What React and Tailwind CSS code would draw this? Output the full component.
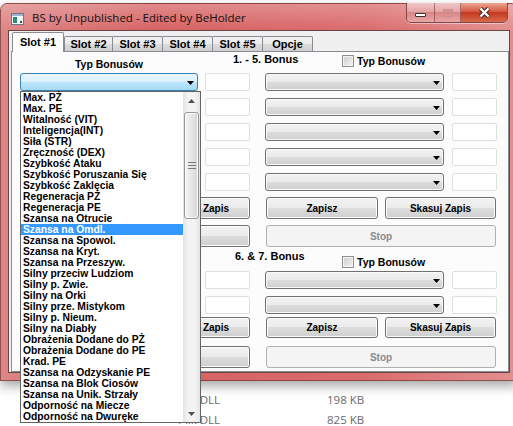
import clsx from "clsx";

const bonusy = [
  "Max. PŻ",
  "Max. PE",
  "Witalność (VIT)",
  "Inteligencja(INT)",
  "Siła (STR)",
  "Zręczność (DEX)",
  "Szybkość Ataku",
  "Szybkość Poruszania Się",
  "Szybkość Zaklęcia",
  "Regeneracja PŻ",
  "Regeneracja PE",
  "Szansa na Otrucie",
  "Szansa na Omdl.",
  "Szansa na Spowol.",
  "Szansa na Kryt.",
  "Szansa na Przeszyw.",
  "Silny przeciw Ludziom",
  "Silny p. Zwie.",
  "Silny na Orki",
  "Silny prze. Mistykom",
  "Silny p. Nieum.",
  "Silny na Diabły",
  "Obrażenia Dodane do PŻ",
  "Obrażenia Dodane do PE",
  "Krad. PE",
  "Szansa na Odzyskanie PE",
  "Szansa na Blok Ciosów",
  "Szansa na Unik. Strzały",
  "Odporność na Miecze",
  "Odporność na Dwuręke",
];

const tabs = [
  { label: "Slot #1", w: "w-[52px]" },
  { label: "Slot #2", w: "w-[49px]" },
  { label: "Slot #3", w: "w-[51px]" },
  { label: "Slot #4", w: "w-[51px]" },
  { label: "Slot #5", w: "w-[51px]" },
  { label: "Opcje", w: "w-[51px]" },
];

function Arrow() {
  return (
    <svg width="7" height="4" viewBox="0 0 7 4" className="mt-[2px]">
      <path d="M0 0h7L3.5 4z" fill="#000" />
    </svg>
  );
}

function Combo({ w, open }) {
  return (
    <div
      className={clsx(
        "flex h-[18px] items-center justify-end rounded-[3px] border pr-[3px]",
        open
          ? "border-[#3c7fb1] bg-[linear-gradient(#eaf6fd,#d9f0fc_50%,#bee6fd_50%,#a7d9f5)]"
          : "border-[#707070] bg-[linear-gradient(#f2f2f2,#ebebeb_50%,#dddddd_50%,#cfcfcf)] shadow-[inset_0_0_0_1px_#fafafa]",
        w
      )}
    >
      <Arrow />
    </div>
  );
}

function Field() {
  return <div className="h-[18px] w-[45px] rounded-[2px] border border-[#dcdfe4] bg-white" />;
}

function Btn({ w, h, disabled, children }) {
  return (
    <div
      className={clsx(
        "flex items-center justify-center rounded-[3px] border text-[10px] font-bold",
        disabled
          ? "border-[#adb2b5] bg-[#f4f4f4] text-[#8a8a8a]"
          : "border-[#707070] bg-[linear-gradient(#f2f2f2,#ebebeb_50%,#dddddd_50%,#cfcfcf)] text-black shadow-[inset_0_0_0_1px_#fcfcfc]",
        w,
        h
      )}
    >
      {children}
    </div>
  );
}

function Check() {
  return (
    <div className="h-[12px] w-[12px] border border-[#8e8f8f] bg-[linear-gradient(135deg,#c9ccd1,#f4f4f4)] shadow-[inset_0_0_0_1px_#f4f4f4]" />
  );
}

function BonusRow({ openLeft }) {
  return (
    <div className="flex h-[18px]">
      <Combo w="w-[178px]" open={openLeft} />
      <div className="ml-[7px]">
        <Field />
      </div>
      <div className="ml-[15px]">
        <Combo w="w-[179px]" />
      </div>
      <div className="ml-[8px]">
        <Field />
      </div>
    </div>
  );
}

// lewy "Zapisz" leży pod rozwiniętą listą, więc zostaje bez napisu
function Buttons({ h }) {
  return (
    <div className="flex">
      <Btn w="w-[112px]" h={h} />
      <div className="ml-[6px]">
        <Btn w="w-[112px]" h={h}>
          <span className="pl-[44px]">Zapis</span>
        </Btn>
      </div>
      <div className="ml-[16px]">
        <Btn w="w-[112px]" h={h}>Zapisz</Btn>
      </div>
      <div className="ml-[7px]">
        <Btn w="w-[111px]" h={h}>Skasuj Zapis</Btn>
      </div>
    </div>
  );
}

function StopRow() {
  return (
    <div className="flex">
      <Btn w="w-[230px]" h="h-[22px]" />
      <div className="ml-[16px]">
        <Btn w="w-[230px]" h="h-[22px]" disabled>
          Stop
        </Btn>
      </div>
    </div>
  );
}

function TitleIcon() {
  return (
    <svg width="13" height="12" viewBox="0 0 13 12">
      <rect x="0.5" y="0.5" width="12" height="11" fill="#f4f6f8" stroke="#6b7785" />
      <rect x="1" y="1" width="11" height="2" fill="#9fb3c8" />
      <rect x="2" y="4" width="4" height="6" fill="#2e8b7a" />
      <rect x="9" y="8" width="2" height="2" fill="#3b4652" />
    </svg>
  );
}

function CaptionButtons() {
  return (
    <div className="-mt-px ml-auto flex h-[20px] self-start overflow-hidden rounded-b-[5px] border border-t-0 border-[#5a2b2b]/70 shadow-[0_1px_0_rgba(255,255,255,0.45)]">
      <div className="flex w-[28px] items-center justify-center border-r border-[#5a2b2b]/50 bg-[linear-gradient(#f1c6c6,#e6a5a5_45%,#d98585_50%,#e7a6a6)]">
        <div className="mt-[4px] h-[4px] w-[11px] rounded-[1px] border border-[#333] bg-white" />
      </div>
      <div className="flex w-[26px] items-center justify-center border-r border-[#5a2b2b]/50 bg-[linear-gradient(#f1c6c6,#e6a5a5_45%,#d98585_50%,#e7a6a6)]">
        <div className="h-[8px] w-[10px] border border-[#c58f8f] shadow-[inset_0_2px_0_#c58f8f] opacity-80" />
      </div>
      <div className="flex w-[46px] items-center justify-center bg-[linear-gradient(#eaa893,#d7573f_45%,#c33a1f_50%,#d8684a)]">
        <svg width="13" height="11" viewBox="0 0 13 11">
          <path d="M2.5 1.5L10.5 9.5M10.5 1.5L2.5 9.5" stroke="#3a2a2a" strokeWidth="4.4" />
          <path d="M2.5 1.5L10.5 9.5M10.5 1.5L2.5 9.5" stroke="#fff" strokeWidth="2.4" />
        </svg>
      </div>
    </div>
  );
}

function DropList() {
  return (
    <div className="absolute left-[20px] top-[91px] z-20 flex h-[332px] w-[181px] border border-[#646464] bg-white font-['Liberation_Sans',Arial,sans-serif] text-[10.3px] font-bold leading-[11px] text-black">
      <div className="flex w-[162px] flex-col">
        {bonusy.map((b, i) => (
          <div key={b} className={clsx("h-[11px] whitespace-nowrap pl-[2px]", i === 12 && "bg-[#3399ff] text-white")}>
            {b}
          </div>
        ))}
      </div>
      <div className="flex w-[17px] flex-col bg-[linear-gradient(90deg,#e4e4e4,#f3f3f3_30%,#f3f3f3_70%,#e4e4e4)]">
        <div className="flex h-[17px] items-center justify-center">
          <svg width="7" height="4" viewBox="0 0 7 4">
            <path d="M3.5 0L7 4H0z" fill="#505050" />
          </svg>
        </div>
        <div className="mx-[1px] mt-[3px] flex h-[107px] items-center justify-center rounded-[3px] border border-[#979797] bg-[linear-gradient(90deg,#f4f4f4,#e6e6e6_50%,#d5d5d5)] shadow-[inset_0_0_0_1px_#fafafa]">
          <svg width="8" height="7" viewBox="0 0 8 7">
            <path d="M0 0.5h8M0 3.5h8M0 6.5h8" stroke="#7a7a7a" />
          </svg>
        </div>
        <div className="flex-1" />
        <div className="flex h-[17px] items-center justify-center">
          <svg width="7" height="4" viewBox="0 0 7 4">
            <path d="M0 0h7L3.5 4z" fill="#505050" />
          </svg>
        </div>
      </div>
    </div>
  );
}

export default function App() {
  return (
    <div className="relative flex h-[426px] w-[513px] flex-col overflow-hidden bg-white">
      {/* okno programu */}
      <div className="relative z-10 mt-[3px] h-[378px] w-[518px] shrink-0 rounded-t-[7px] border border-[#5b2a2a]/60 bg-[linear-gradient(90deg,#de8585,#d66263_30%,#da6b6c_70%,#e38f8f)] px-[7px] pb-[7px] shadow-[0_5px_12px_rgba(0,0,0,0.35)]">
        <div className="-mx-[7px] flex h-[26px] bg-[linear-gradient(rgba(255,255,255,0.25),rgba(255,255,255,0))] pl-[10px] pr-[9px]">
          <div className="mt-[9px]">
            <TitleIcon />
          </div>
          <div className="ml-[8px] mt-[6px] font-['Open_Sans',sans-serif] text-[11.5px] leading-[16px] text-[#111]">
            BS by Unpublished - Edited by BeHolder
          </div>
          <CaptionButtons />
        </div>

        <div className="h-[343px] border border-[#6a4444] bg-[#f0f0f0] font-['Liberation_Sans',Arial,sans-serif] text-black">
          <div className="flex h-[20px] items-end">
            {tabs.map((t, i) =>
              i === 0 ? (
                <div
                  key={t.label}
                  className={clsx(
                    "relative z-10 -mb-px ml-[3px] flex h-[20px] justify-center rounded-t-[2px] border border-b-0 border-[#898c95] bg-[#fcfcfc] pt-[3px] text-[11px] font-bold leading-[13px]",
                    t.w
                  )}
                >
                  {t.label}
                </div>
              ) : (
                <div
                  key={t.label}
                  className={clsx(
                    "-ml-px flex h-[15px] justify-center rounded-t-[2px] border border-b-0 border-[#898c95] bg-[linear-gradient(#f2f2f2,#ebebeb_50%,#dddddd_50%,#cfcfcf)] pt-px text-[11px] font-bold leading-[13px]",
                    i === 1 && "ml-0",
                    t.w
                  )}
                >
                  {t.label}
                </div>
              )
            )}
          </div>

          <div className="ml-[2px] h-[321px] w-[498px] border border-[#898c95] bg-[#fcfcfc] pl-[8px]">
            {/* 1. - 5. Bonus */}
            <div className="flex h-[21px]">
              <div className="w-[178px] pt-[6px] text-center text-[10.5px] font-bold leading-[12px]">Typ Bonusów</div>
              <div className="ml-[35px] w-[109px] pt-px text-[11px] font-bold leading-[12px]">1. - 5. Bonus</div>
              <div className="flex h-[12px] items-center pt-[6px]">
                <Check />
                <span className="ml-[3px] text-[10.5px] font-bold leading-[12px]">Typ Bonusów</span>
              </div>
            </div>
            <div className="flex flex-col gap-[7px]">
              <BonusRow openLeft />
              <BonusRow />
              <BonusRow />
              <BonusRow />
              <BonusRow />
            </div>
            <div className="mt-[6px]">
              <Buttons h="h-[22px]" />
            </div>
            <div className="mt-[6px]">
              <StopRow />
            </div>

            {/* 6. & 7. Bonus */}
            <div className="flex h-[24px]">
              <div className="w-[178px]" />
              <div className="ml-[37px] w-[107px] pt-[3px] text-[11px] font-bold leading-[12px]">6. &amp; 7. Bonus</div>
              <div className="flex items-center self-start pt-[9px]">
                <Check />
                <span className="ml-[3px] text-[10.5px] font-bold leading-[12px]">Typ Bonusów</span>
              </div>
            </div>
            <div className="flex flex-col gap-[7px]">
              <BonusRow />
              <BonusRow />
            </div>
            <div className="mt-[3px]">
              <Buttons h="h-[21px]" />
            </div>
            <div className="mt-[8px]">
              <StopRow />
            </div>
          </div>
        </div>
      </div>

      {/* lista plików w tle */}
      <div className="flex flex-col pt-[9px] font-['Open_Sans',sans-serif] text-[11.5px] leading-[20px] text-[#6a6a6a]">
        <div className="flex pl-[178px]">
          <span className="w-[149px]">Plik DLL</span>
          <span>198 KB</span>
        </div>
        <div className="flex pl-[178px]">
          <span className="w-[149px]">Plik DLL</span>
          <span>825 KB</span>
        </div>
      </div>

      <DropList />
    </div>
  );
}
